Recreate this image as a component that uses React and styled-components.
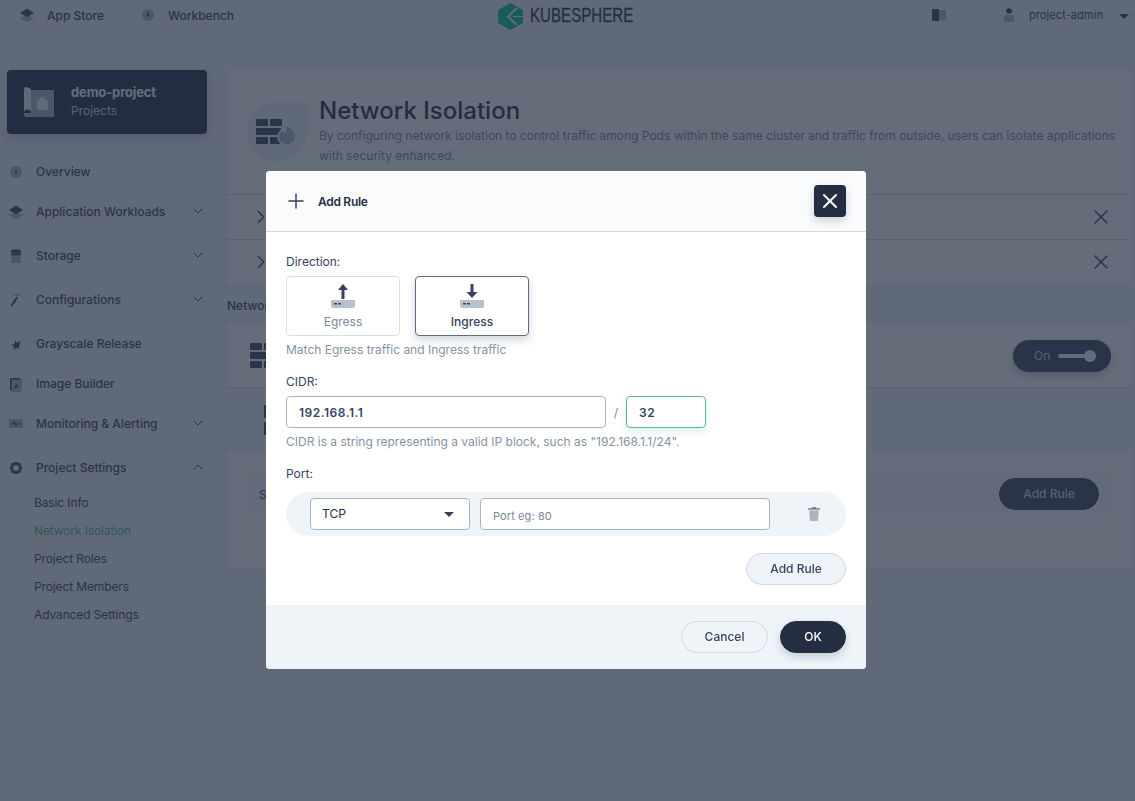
import React from 'react';
import styled, { createGlobalStyle } from 'styled-components';
import { ChevronDown, ChevronUp, ChevronRight, Plus, X } from 'lucide-react';

const Global = createGlobalStyle`
  html, body { margin: 0; padding: 0; height: 100%; }
  body {
    font-family: Inter, "Noto Sans", sans-serif;
    font-size: 12px;
    color: #36435c;
    background: #eff4f9;
  }
  * { box-sizing: border-box; }
`;

const Page = styled.div`
  height: 801px;
  overflow: hidden;
  background: #eff4f9;
`;
const Header = styled.header`
  height: 50px;
  display: grid;
  grid-template-columns: 1fr auto 1fr;
  padding: 0 6px 20px 19px;
  align-items: center;
  box-shadow: 0 1px 0 rgba(209, 215, 227, 0.5);
`;
const NavLeft = styled.nav`
  display: flex;
  align-items: center;
  gap: 36px;
`;
const NavRight = styled.div`
  display: flex;
  align-items: center;
  justify-content: flex-end;
`;
const NavLink = styled.a`
  display: flex;
  align-items: center;
  gap: 12px;
  font-size: 12px;
  font-weight: 500;
`;
const Logo = styled.div`
  display: flex;
  align-items: center;
  gap: 7px;
  margin-left: -17px;
  width: 135px;
  svg { flex: none; margin-top: 3px; }
`;
const LogoText = styled.span`
  flex: 0 0 103px;
  display: inline-block;
  font-family: "Liberation Sans", sans-serif;
  font-size: 21px;
  line-height: 20px;
  color: #242e42;
  -webkit-text-stroke: 0.3px #242e42;
  transform: scaleX(0.72);
  transform-origin: left center;
  white-space: nowrap;
`;
const HelpIconWrap = styled.span`
  display: flex;
  margin-right: 58px;
`;
const UserName = styled.span`
  margin: 0 16px 0 15px;
  font-size: 11px;
  letter-spacing: 0.1px;
`;
const Body = styled.div`
  display: flex;
  padding-top: 20px;
`;
const Sidebar = styled.aside`
  flex: 0 0 227px;
  padding: 0 20px 0 7px;
`;
const ProjectCard = styled.div`
  height: 64px;
  display: flex;
  align-items: center;
  gap: 17px;
  padding: 0 17px;
  background: #242e42;
  border-radius: 4px;
  box-shadow: 0 4px 8px rgba(35, 45, 65, 0.2);
  margin-bottom: 17px;
`;
const ProjectName = styled.div`
  font-size: 13px;
  line-height: 20px;
  font-weight: 700;
  letter-spacing: -0.15px;
  color: #fff;
  margin-top: -2px;
`;
const ProjectKind = styled.div`
  font-size: 12px;
  line-height: 18px;
  color: #d1d7e3;
`;
const MenuItem = styled.div`
  height: 40px;
  display: flex;
  align-items: center;
  margin-left: -7px;
  padding-right: 1px;
  margin-bottom: ${p => (p.$group ? '4px' : '0')};
  font-size: 12px;
  font-weight: 500;
  color: #36435c;
`;
const MenuIcon = styled.span`
  flex: 0 0 36px;
  display: flex;
  justify-content: center;
  padding: 2px 4px 0 0;
`;
const MenuLabel = styled.span`
  flex: 1;
`;
const SubMenu = styled.div`
  padding-top: 2px;
`;
const SubItem = styled.div`
  height: 28px;
  line-height: 28px;
  padding-left: 27px;
  font-size: 12px;
  letter-spacing: -0.12px;
  color: ${p => (p.$active ? '#55bc8a' : '#36435c')};
`;
const Main = styled.main`
  flex: 0 0 904px;
`;
const Panel = styled.section`
  background: #fff;
  border-radius: 4px;
`;
const Hero = styled.div`
  height: 125px;
  display: flex;
  gap: 12px;
  padding: 26px 0 0 20px;
  border-bottom: 1px solid #d8dee5;
`;
const HeroIcon = styled.div`
  flex: 0 0 60px;
  height: 60px;
  margin-top: 6px;
  display: flex;
  align-items: center;
  justify-content: center;
  background: #eff4f9;
  border-radius: 30px 0 30px 30px;
`;
const Title = styled.h1`
  margin: 0;
  font-size: 24px;
  line-height: 30px;
  font-weight: 500;
  color: #242e42;
`;
const Description = styled.p`
  margin: 0;
  font-size: 12px;
  line-height: 20px;
  color: #79879c;
`;
const RuleRow = styled.div`
  height: ${p => (p.$last ? '44px' : '45px')};
  display: flex;
  align-items: center;
  justify-content: space-between;
  padding: 0 18px 0 23px;
  border-bottom: ${p => (p.$last ? 'none' : '1px solid #d8dee5')};
`;
const SectionTitle = styled.h2`
  margin: 0;
  height: 40px;
  padding-top: 13px;
  font-size: 12px;
  line-height: 18px;
  font-weight: 500;
  color: #36435c;
`;
const StatusCard = styled(Panel)`
  height: 64px;
  display: flex;
  align-items: center;
  justify-content: space-between;
  padding: 0 20px 0 23px;
  border-radius: 4px 4px 0 0;
  border-bottom: 1px solid #d8dee5;
`;
const Toggle = styled.div`
  width: 98px;
  height: 32px;
  display: flex;
  align-items: center;
  gap: 8px;
  padding-left: 21px;
  background: #36435c;
  border-radius: 16px;
  font-size: 12px;
  color: #d1d7e3;
  box-shadow: 0 4px 8px rgba(36, 46, 66, 0.25);
`;
const ToggleTrack = styled.span`
  position: relative;
  width: 38px;
  height: 4px;
  background: #fff;
  border-radius: 2px;
  &::after {
    content: '';
    position: absolute;
    right: 0;
    top: -4px;
    width: 12px;
    height: 12px;
    border-radius: 50%;
    background: #fff;
  }
`;
const TabBand = styled.div`
  height: 64px;
  display: flex;
  padding-left: 37px;
`;
const TabIcons = styled.div`
  flex: 0 0 609px;
  display: flex;
  flex-direction: column;
  justify-content: center;
  gap: 4px;
  background: #f9fbfd;
`;
const TabMark = styled.span`
  width: 5px;
  height: 13px;
  background: #36435c;
  border-radius: 1px;
`;
const RulePanel = styled(Panel)`
  height: 116px;
  padding: 20px;
  border-radius: 0 0 4px 4px;
`;
const RuleBox = styled.div`
  height: 44px;
  display: flex;
  align-items: center;
  justify-content: space-between;
  padding: 0 12px;
  background: #f9fbfd;
  font-size: 12px;
`;
const DarkButton = styled.button`
  width: 100px;
  height: 32px;
  margin-top: -1px;
  border: 1px solid #36435c;
  border-radius: 16px;
  background: #36435c;
  color: #d1d7e3;
  font: 500 12px Inter, sans-serif;
`;
const Overlay = styled.div`
  position: fixed;
  inset: 0;
  display: flex;
  justify-content: center;
  align-items: flex-start;
  padding: 171px 3px 0 0;
  background: rgba(35, 45, 65, 0.7);
`;
const Modal = styled.div`
  width: 600px;
  background: #fff;
  border-radius: 4px;
  overflow: hidden;
`;
const ModalHeader = styled.div`
  height: 61px;
  display: flex;
  align-items: center;
  padding: 0 20px 0 18px;
  background: #f9fbfd;
  border-bottom: 1px solid #d1d7e3;
  font-size: 12px;
  font-weight: 600;
  letter-spacing: -0.3px;
  color: #242e42;
`;
const HeaderPlus = styled.span`
  display: flex;
  margin-right: 10px;
  color: #36435c;
`;
const CloseButton = styled.button`
  margin-left: auto;
  width: 32px;
  height: 32px;
  display: flex;
  align-items: center;
  justify-content: center;
  padding: 0;
  border: none;
  border-radius: 4px;
  background: #242e42;
  color: #fff;
  box-shadow: 0 4px 8px rgba(36, 46, 66, 0.2);
`;
const ModalBody = styled.div`
  padding: 20px 20px 20px;
`;
const Label = styled.div`
  height: 20px;
  line-height: 20px;
  font-size: 12px;
  color: #36435c;
  margin-top: ${p => p.$top || 0}px;
  margin-bottom: ${p => p.$bottom || 4}px;
`;
const Tiles = styled.div`
  display: flex;
  gap: 15px;
`;
const Tile = styled.div`
  width: 114px;
  height: 60px;
  display: flex;
  flex-direction: column;
  align-items: center;
  padding-top: 7px;
  gap: 6px;
  background: #fff;
  border: 1px solid ${p => (p.$selected ? '#5d6d88' : '#d8e0ea')};
  border-radius: 4px;
  font-size: 12px;
  line-height: 15px;
  font-weight: ${p => (p.$selected ? 500 : 400)};
  color: ${p => (p.$selected ? '#36435c' : '#79879c')};
  box-shadow: ${p => (p.$selected ? '0 4px 8px rgba(36, 46, 66, 0.2)' : 'none')};
  svg { flex: none; }
`;
const Help = styled.div`
  height: 20px;
  line-height: 20px;
  margin-top: 4px;
  font-size: 12px;
  color: #8492a6;
`;
const CidrRow = styled.div`
  display: flex;
  align-items: center;
`;
const TextInput = styled.div`
  width: ${p => p.$width}px;
  height: 32px;
  display: flex;
  align-items: center;
  padding: 0 12px;
  background: #fff;
  border: 1px solid ${p => (p.$focus ? '#55bc8a' : '#abb4be')};
  border-radius: 4px;
  font-size: 12px;
  font-weight: 600;
  letter-spacing: 0.5px;
  color: #36435c;
  box-shadow: ${p => (p.$focus ? '0 4px 8px rgba(85, 188, 138, 0.2)' : 'none')};
`;
const Slash = styled.span`
  width: 20px;
  text-align: center;
  color: #79879c;
`;
const PortRow = styled.div`
  height: 44px;
  display: flex;
  align-items: center;
  padding: 0 24px;
  background: #eff4f9;
  border-radius: 22px;
`;
const Select = styled.div`
  width: 160px;
  height: 32px;
  display: flex;
  align-items: center;
  justify-content: space-between;
  padding: 0 15px 2px 11px;
  margin-right: 10px;
  background: #fff;
  border: 1px solid #abb4be;
  border-radius: 4px;
  font-size: 12px;
  color: #242e42;
`;
const Caret = styled.span`
  width: 0;
  height: 0;
  margin-top: 2px;
  border-left: 5px solid transparent;
  border-right: 5px solid transparent;
  border-top: 5px solid ${p => p.$color || '#36435c'};
`;
const PortInput = styled.div`
  width: 290px;
  height: 32px;
  display: flex;
  align-items: center;
  padding: 4px 12px 0;
  background: #fff;
  border: 1px solid #abb4be;
  border-radius: 4px;
  font-size: 11px;
  letter-spacing: 0.1px;
  color: #79879c;
`;
const TrashWrap = styled.span`
  display: flex;
  margin-left: 38px;
`;
const RuleActions = styled.div`
  display: flex;
  justify-content: flex-end;
  margin-top: 17px;
`;
const Pill = styled.button`
  height: 32px;
  width: ${p => p.$width}px;
  padding: 0 0 2px;
  border-radius: 16px;
  font: 500 12px Inter, sans-serif;
  border: 1px solid ${p => (p.$dark ? '#242e42' : '#d1d7e3')};
  background: ${p => (p.$dark ? '#242e42' : p.$plain ? 'transparent' : '#eff4f9')};
  color: ${p => (p.$dark ? '#fff' : '#36435c')};
  box-shadow: ${p => (p.$dark ? '0 4px 8px rgba(36, 46, 66, 0.2)' : 'none')};
`;
const ModalFooter = styled.div`
  height: 64px;
  display: flex;
  align-items: center;
  justify-content: flex-end;
  gap: 12px;
  padding: 0 20px;
  background: #eff4f9;
`;

const LayersIcon = () => (
  <svg width="16" height="16" viewBox="0 0 16 16">
    <path d="M8 7.500 15 11.500 8 15 1 11.500z" fill="#abb4be" />
    <path d="M8 1.500 15 6 8 10 1 6z" fill="#36435c" />
  </svg>
);
const GaugeIcon = () => (
  <svg width="16" height="16" viewBox="0 0 16 16">
    <circle cx="8" cy="8" r="6" fill="#abb4be" />
    <path d="M8 3.500 9 8.500a1 1 0 0 1-2 0z" fill="#36435c" />
  </svg>
);
const StorageIcon = () => (
  <svg width="16" height="16" viewBox="0 0 16 16">
    <rect x="3" y="8" width="10" height="7" rx="1.500" fill="#abb4be" />
    <ellipse cx="8" cy="3.500" rx="5" ry="2.200" fill="#36435c" />
    <rect x="3" y="5.500" width="10" height="2" fill="#36435c" />
  </svg>
);
const HammerIcon = () => (
  <svg width="16" height="16" viewBox="0 0 16 16">
    <path d="M5 3.500 9 1.500c2 0 4 1 5 3-2-1-3-1-4-.5z" fill="#abb4be" />
    <path d="M8.500 4.500 10 6 4 14.500 2.500 13.500z" fill="#36435c" />
  </svg>
);
const BirdIcon = () => (
  <svg width="16" height="16" viewBox="0 0 16 16">
    <path d="M3 8l3.500.5L7 4l2 3 3.500-2.500L11 10l.5 3-3-1.500L5.500 14l.5-3.500z" fill="#36435c" />
  </svg>
);
const ImageIcon = () => (
  <svg width="16" height="16" viewBox="0 0 16 16">
    <rect x="3" y="3" width="11" height="13" rx="1" fill="#abb4be" />
    <path d="M2 2h10v1.500H3.500V14H2z" fill="#36435c" />
    <path d="M8.500 8 11 11.500H6z" fill="#36435c" />
  </svg>
);
const PulseIcon = () => (
  <svg width="16" height="12" viewBox="0 0 16 12">
    <rect x="1" y="1" width="14" height="9" rx="1" fill="#abb4be" />
    <path d="M3 6h2l1.500-2.500L8 8l1.500-3 1 1h2" fill="none" stroke="#36435c" strokeWidth="1" />
  </svg>
);
const GearIcon = () => (
  <svg width="14" height="14" viewBox="0 0 24 24">
    <circle cx="12" cy="12" r="7.500" fill="none" stroke="#36435c" strokeWidth="4.500" />
    <path d="M12 1v5M12 18v5M1 12h5M18 12h5M4.200 4.200l3.500 3.500M16.300 16.300l3.500 3.500M19.800 4.200l-3.500 3.500M7.700 16.300l-3.500 3.500" stroke="#36435c" strokeWidth="3.500" />
  </svg>
);
const ProjectIcon = () => (
  <svg width="30" height="30" viewBox="0 0 30 30" style={{ flex: 'none' }}>
    <path d="M7 3h23v27H2a2 2 0 0 1-2-2V26h7z" fill="#abb4be" />
    <path d="M0 2a2 2 0 0 1 3-1.700L7 2v24a3.500 3.500 0 0 0-7 0z" fill="#eff4f9" />
    <path d="M13 14l5.500-5 5.500 5v9H13z" fill="#eff4f9" />
  </svg>
);
const BookIcon = () => (
  <svg width="14" height="12" viewBox="0 0 14 12">
    <path d="M0 0h7v12H1a1 1 0 0 1-1-1z" fill="#36435c" />
    <path d="M7 1h7v10H7z" fill="#abb4be" />
  </svg>
);
const UserIcon = () => (
  <svg width="10" height="14" viewBox="0 0 10 14">
    <circle cx="5" cy="3" r="2.800" fill="#36435c" />
    <path d="M0 14V10a3 3 0 0 1 3-3h4a3 3 0 0 1 3 3v4z" fill="#abb4be" />
  </svg>
);
const LogoMark = () => (
  <svg width="25" height="27" viewBox="0 0 25 27">
    <path d="M12.500 0 25 7v13L12.500 27 0 20V7z" fill="#00c885" />
    <path d="M19 5 10 13.500 19 22" fill="none" stroke="#eff4f9" strokeWidth="2" />
    <path d="M25 13.500H15" stroke="#eff4f9" strokeWidth="1.200" />
  </svg>
);
const WallIcon = ({ flame }) => (
  <svg width={flame ? 42 : 28} height="26" viewBox={flame ? '0 0 42 26' : '0 0 28 26'}>
    <g fill="#36435c">
      <rect x="0" y="0" width="12" height="7" rx="1" />
      <rect x="14" y="0" width="12" height="7" rx="1" />
      <rect x="0" y="9" width="26" height="7" rx="1" />
      <rect x="0" y="18" width="12" height="7" rx="1" />
      <rect x="14" y="18" width="12" height="7" rx="1" />
    </g>
    {flame && <path d="M31 3c1 5 9 8 9 15a9 8 0 0 1-18 0c0-4 3-5 4-8 1 2 2 3 3 3 1-3 1-6 2-10z" fill="#abb4be" stroke="#eff4f9" strokeWidth="2" />}
  </svg>
);
const TrafficIcon = ({ down }) => (
  <svg width="24" height="24" viewBox="0 0 24 24">
    <path d={down ? 'M10.500 0h3v8h4L12 14 6.500 8h4z' : 'M12 0l5 6h-3.500v9h-3V6H7z'} fill="#36435c" />
    <path d="M0 16h24v6a2 2 0 0 1-2 2H2a2 2 0 0 1-2-2z" fill="#b6c1cc" />
    <rect x="3" y="19" width="3" height="1.500" fill="#36435c" />
    <rect x="7" y="19" width="3" height="1.500" fill="#36435c" />
  </svg>
);
const TrashIcon = () => (
  <svg width="12" height="14" viewBox="0 0 12 14">
    <path d="M4 0h4l.5 1.200H12v1.500H0V1.200h3.500z" fill="#79879c" />
    <path d="M1.200 3.500h9.600L10 14H2z" fill="#abb4be" />
  </svg>
);

const menu = [
  { label: 'Overview', icon: <GaugeIcon /> },
  { label: 'Application Workloads', icon: <LayersIcon />, group: true },
  { label: 'Storage', icon: <StorageIcon />, group: true },
  { label: 'Configurations', icon: <HammerIcon />, group: true },
  { label: 'Grayscale Release', icon: <BirdIcon /> },
  { label: 'Image Builder', icon: <ImageIcon /> },
  { label: 'Monitoring & Alerting', icon: <PulseIcon />, group: true },
];
const settings = ['Basic Info', 'Network Isolation', 'Project Roles', 'Project Members', 'Advanced Settings'];

const App = () => (
  <Page>
    <Global />
    <Header>
      <NavLeft>
        <NavLink><LayersIcon />App Store</NavLink>
        <NavLink><GaugeIcon />Workbench</NavLink>
      </NavLeft>
      <Logo>
        <LogoMark />
        <LogoText>KUBESPHERE</LogoText>
      </Logo>
      <NavRight>
        <HelpIconWrap><BookIcon /></HelpIconWrap>
        <UserIcon />
        <UserName>project-admin</UserName>
        <Caret />
      </NavRight>
    </Header>
    <Body>
      <Sidebar>
        <ProjectCard>
          <ProjectIcon />
          <div>
            <ProjectName>demo-project</ProjectName>
            <ProjectKind>Projects</ProjectKind>
          </div>
        </ProjectCard>
        {menu.map(m => (
          <MenuItem key={m.label} $group={m.group}>
            <MenuIcon>{m.icon}</MenuIcon>
            <MenuLabel>{m.label}</MenuLabel>
            {m.group && <ChevronDown size={16} strokeWidth={1.5} />}
          </MenuItem>
        ))}
        <MenuItem>
          <MenuIcon><GearIcon /></MenuIcon>
          <MenuLabel>Project Settings</MenuLabel>
          <ChevronUp size={16} strokeWidth={1.5} />
        </MenuItem>
        <SubMenu>
          {settings.map(s => (
            <SubItem key={s} $active={s === 'Network Isolation'}>{s}</SubItem>
          ))}
        </SubMenu>
      </Sidebar>
      <Main>
        <Panel>
          <Hero>
            <HeroIcon><WallIcon flame /></HeroIcon>
            <div>
              <Title>Network Isolation</Title>
              <Description>
                By configuring network isolation to control traffic among Pods within the same cluster and traffic from outside, users can isolate applications with security enhanced.
              </Description>
            </div>
          </Hero>
          <RuleRow><ChevronRight size={22} strokeWidth={1.5} /><X size={24} strokeWidth={1.5} /></RuleRow>
          <RuleRow $last><ChevronRight size={22} strokeWidth={1.5} /><X size={24} strokeWidth={1.5} /></RuleRow>
        </Panel>
        <SectionTitle>Network Isolation Status</SectionTitle>
        <StatusCard>
          <WallIcon />
          <Toggle>On<ToggleTrack /></Toggle>
        </StatusCard>
        <TabBand>
          <TabIcons><TabMark /><TabMark /></TabIcons>
        </TabBand>
        <RulePanel>
          <RuleBox>
            <span>Set rules</span>
            <DarkButton>Add Rule</DarkButton>
          </RuleBox>
        </RulePanel>
      </Main>
    </Body>
    <Overlay>
      <Modal>
        <ModalHeader>
          <HeaderPlus><Plus size={24} strokeWidth={1.5} /></HeaderPlus>
          Add Rule
          <CloseButton><X size={24} strokeWidth={2} /></CloseButton>
        </ModalHeader>
        <ModalBody>
          <Label>Direction:</Label>
          <Tiles>
            <Tile><TrafficIcon />Egress</Tile>
            <Tile $selected><TrafficIcon down />Ingress</Tile>
          </Tiles>
          <Help>Match Egress traffic and Ingress traffic</Help>
          <Label $top={12}>CIDR:</Label>
          <CidrRow>
            <TextInput $width={320}>192.168.1.1</TextInput>
            <Slash>/</Slash>
            <TextInput $width={80} $focus>32</TextInput>
          </CidrRow>
          <Help>CIDR is a string representing a valid IP block, such as "192.168.1.1/24".</Help>
          <Label $top={12} $bottom={8}>Port:</Label>
          <PortRow>
            <Select>TCP<Caret /></Select>
            <PortInput>Port eg: 80</PortInput>
            <TrashWrap><TrashIcon /></TrashWrap>
          </PortRow>
          <RuleActions><Pill $width={100}>Add Rule</Pill></RuleActions>
        </ModalBody>
        <ModalFooter>
          <Pill $width={87} $plain>Cancel</Pill>
          <Pill $width={66} $dark>OK</Pill>
        </ModalFooter>
      </Modal>
    </Overlay>
  </Page>
);

export default App;
